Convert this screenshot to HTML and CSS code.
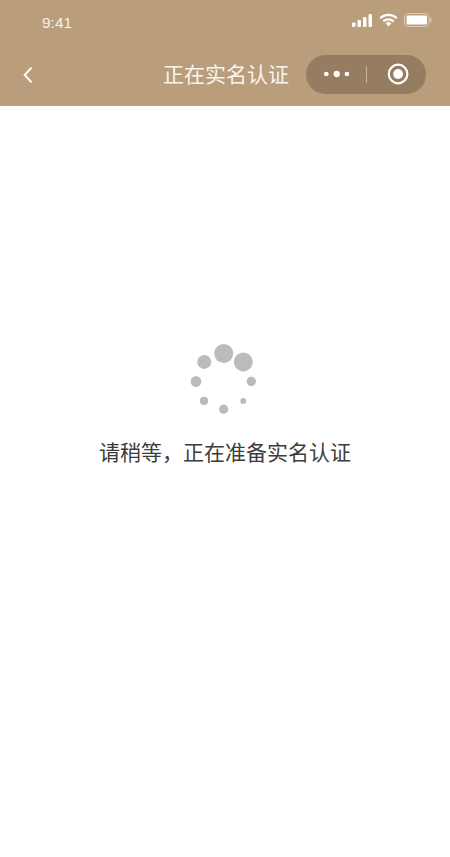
FILE: index.html
```html
<!DOCTYPE html>
<html lang="zh-CN">
<head>
<meta charset="utf-8">
<title>正在实名认证</title>
<link rel="stylesheet" href="styles.css">
</head>
<body>
<header class="header">
  <div class="status">
    <span class="time">9:41</span>
    <div class="status-icons">
      <svg class="signal" width="21" height="13" viewBox="0 0 21 13"><rect x="0" y="8.5" width="3.5" height="4.5" rx="1"/><rect x="5.5" y="6" width="3.5" height="7" rx="1"/><rect x="11" y="3" width="3.5" height="10" rx="1"/><rect x="16.5" y="0" width="3.5" height="13" rx="1"/></svg>
      <svg class="wifi" width="19" height="14" viewBox="0 0 19 14"><path class="arc" d="M1.2 5.2a11.8 11.8 0 0 1 16.6 0"/><path class="arc" d="M4.4 8.4a7.3 7.3 0 0 1 10.2 0"/><path class="wedge" d="M6.6 10.3a4.2 4.2 0 0 1 5.8 0L9.5 13.4z"/></svg>
      <svg class="battery" width="28" height="14" viewBox="0 0 28 14"><rect class="shell" x="0.5" y="0.5" width="24.5" height="13" rx="3.5"/><rect class="fill" x="2.5" y="2.5" width="20.5" height="9" rx="1.5"/><rect class="cap" x="26" y="4.8" width="1.4" height="4.4" rx="0.7"/></svg>
    </div>
  </div>
  <div class="nav">
    <svg class="back" width="12" height="18" viewBox="0 0 12 18"><path d="M9.6 1.6 2.6 9l7 7.4"/></svg>
    <h1 class="title">正在实名认证</h1>
    <div class="capsule">
      <svg class="more" width="27" height="8" viewBox="0 0 27 8"><circle cx="3.4" cy="4" r="2.4"/><circle cx="14" cy="4" r="3.2"/><circle cx="24.4" cy="4" r="2.4"/></svg>
      <span class="divider"></span>
      <svg class="target" width="22" height="22" viewBox="0 0 22 22"><circle class="ring" cx="11.3" cy="11" r="9.5"/><circle class="core" cx="11.3" cy="11" r="5"/></svg>
    </div>
  </div>
</header>
<main class="main">
  <svg class="spinner" width="70" height="76" viewBox="0 0 70 76">
    <circle cx="34.7" cy="10.5" r="9.5"/>
    <circle cx="54.3" cy="18.9" r="9.5"/>
    <circle cx="62.3" cy="38.5" r="4.7"/>
    <circle cx="54.3" cy="57.9" r="3"/>
    <circle cx="34.7" cy="66.2" r="4.6"/>
    <circle cx="15" cy="57.9" r="4.1"/>
    <circle cx="7" cy="38.5" r="5.4"/>
    <circle cx="15.3" cy="18.9" r="7"/>
  </svg>
  <p class="message">请稍等，正在准备实名认证</p>
</main>
</body>
</html>
```
FILE: styles.css
```css
* { box-sizing: border-box; }
html, body { margin: 0; padding: 0; }
body {
  width: 450px;
  height: 857px;
  overflow: hidden;
  background: #fff;
  font-family: "Noto Sans CJK SC", "Liberation Sans", sans-serif;
}
.header { height: 105.5px; background: #ba9d7b; color: #fff; }
.status {
  height: 45px;
  padding: 13px 18px 0 42px;
  display: flex;
  justify-content: space-between;
  align-items: flex-start;
}
.time {
  font-family: "Liberation Sans", sans-serif;
  font-size: 15.5px;
  line-height: 19px;
  color: #f6f1ea;
}
.status-icons { display: flex; align-items: center; gap: 6px; height: 14px; }
.signal { fill: #fff; }
.wifi .arc { fill: none; stroke: #fff; stroke-width: 2.2; }
.wifi .wedge { fill: #fff; }
.battery .shell { fill: none; stroke: #dccbb6; stroke-width: 1; }
.battery .fill { fill: #fff; }
.battery .cap { fill: #dccbb6; }
.nav {
  height: 60px;
  padding: 0 24px 0 22px;
  display: flex;
  align-items: center;
}
.back { fill: none; stroke: #fff; stroke-width: 2; }
.title {
  margin: -4px 17px 0 auto;
  font-size: 21px;
  font-weight: 400;
  line-height: 30px;
  color: #f8f4ef;
}
.capsule {
  width: 120px;
  height: 39px;
  margin-top: -2px;
  border-radius: 20px;
  background: #967c60;
  display: flex;
  align-items: center;
  padding: 0 17px;
}
.more { fill: #fff; }
.divider { width: 1px; height: 17px; margin: 0 20px 0 17px; background: #c5b4a0; }
.target .ring { fill: none; stroke: #fff; stroke-width: 2.2; }
.target .core { fill: #fff; }
.main {
  display: flex;
  flex-direction: column;
  align-items: center;
  padding-top: 237px;
}
.spinner { fill: #bbb; margin-left: -3px; }
.message {
  margin: 17px 0 0;
  font-size: 21px;
  font-weight: 400;
  line-height: 30px;
  color: #3c3c3c;
  white-space: nowrap;
}
```
